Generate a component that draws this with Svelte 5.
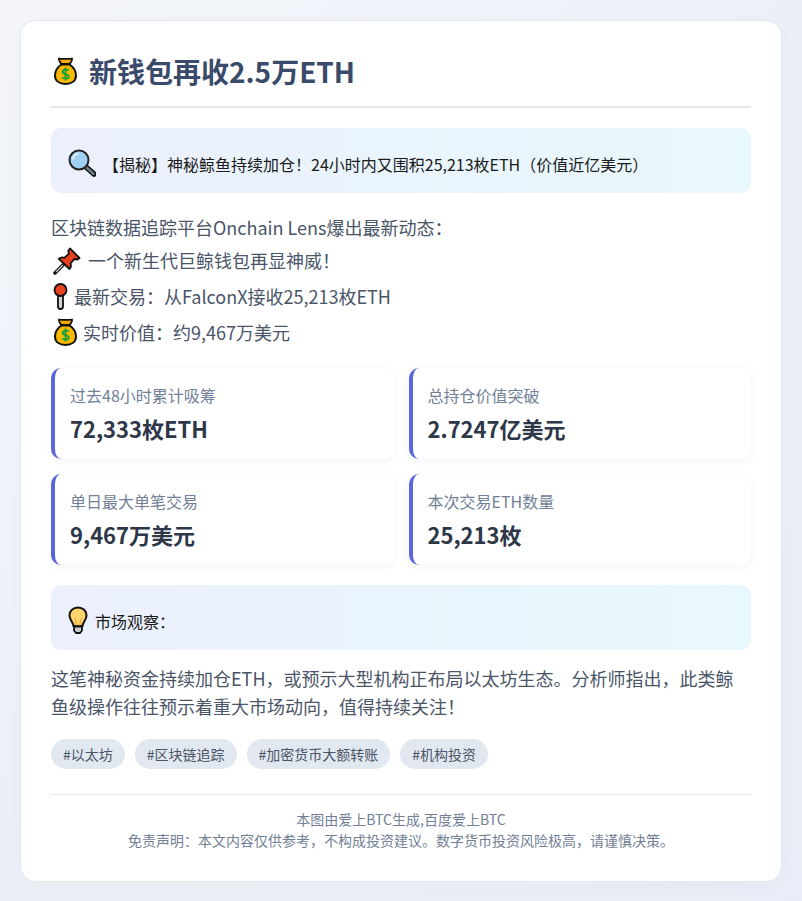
<script>
  const stats = [
    { label: '过去48小时累计吸筹', value: '72,333枚ETH' },
    { label: '总持仓价值突破', value: '2.7247亿美元' },
    { label: '单日最大单笔交易', value: '9,467万美元' },
    { label: '本次交易ETH数量', value: '25,213枚' }
  ]
  const tags = ['#以太坊', '#区块链追踪', '#加密货币大额转账', '#机构投资']
</script>

{#snippet bag()}
  <svg class="emoji bag" width="23" height="28" viewBox="0 0 23 28">
    <path d="M8 7C3.500 10 1 14 1 18.500 1 24 5.500 27 11.500 27S22 24 22 18.500C22 14 19.500 10 15 7z" fill="#fdb900" stroke="#111" stroke-width="2" />
    <path d="M5 1.500c2 .8 4 .3 6.500.3s4.500.5 6.500-.3c.3 2-1 4-2.500 5.500h-8C6 5.500 4.700 3.500 5 1.500z" fill="#f5aa00" stroke="#111" stroke-width="1.800" stroke-linejoin="round" />
    <path d="M7.500 7.500h8" stroke="#111" stroke-width="2" />
    <path d="M14.800 13.500c-1-1.200-6-1.400-6.200 1.200-.2 3 6.400 2 6.200 5-.2 2.600-5.400 2.300-6.700.8M11.500 10.500v13" fill="none" stroke="#12a03c" stroke-width="1.900" />
  </svg>
{/snippet}

<div class="card">
  <h1>{@render bag()}<span>新钱包再收2.5万ETH</span></h1>

  <div class="highlight">
    <svg class="emoji" width="28" height="28" viewBox="0 0 28 28">
      <path d="M18 18l8 7" stroke="#111" stroke-width="5.500" stroke-linecap="round" />
      <path d="M18.500 18.500l7 6.200" stroke="#6b7f86" stroke-width="2.600" stroke-linecap="round" />
      <circle cx="11" cy="11" r="9.500" fill="#9fd0f2" stroke="#222" stroke-width="2" />
      <path d="M5 10.500a6 6 0 0 1 6-6" fill="none" stroke="#d8eefb" stroke-width="2" />
    </svg>
    <span>【揭秘】神秘鲸鱼持续加仓！24小时内又围积25,213枚ETH（价值近亿美元）</span>
  </div>

  <div class="intro">
    <p class="first">区块链数据追踪平台Onchain Lens爆出最新动态：</p>
    <p class="second">
      <svg class="emoji pin" width="28" height="28" viewBox="0 0 28 28">
        <path d="M2 26l8-8" stroke="#111" stroke-width="3.500" stroke-linecap="round" />
        <path d="M3 25l7-7" stroke="#c8ccd0" stroke-width="1.300" />
        <path d="M17 1.500l9.500 9.500-2 1.500-3-.5-4 4.500c.8 2 .4 4-1 5.500L5.800 11.800c1.600-1.400 3.600-1.800 5.500-1l4.500-4-.5-3z" fill="#e8401c" stroke="#111" stroke-width="1.800" stroke-linejoin="round" />
      </svg>
      <span>一个新生代巨鲸钱包再显神威！</span>
    </p>
    <p class="tight">
      <svg class="emoji needle" width="15" height="27" viewBox="0 0 15 27">
        <rect x="5" y="11" width="5" height="15" rx="2.500" fill="#d4d6d8" stroke="#111" stroke-width="1.800" />
        <circle cx="7.500" cy="7" r="6" fill="#e8401c" stroke="#111" stroke-width="1.800" />
      </svg>
      <span>最新交易：从FalconX接收25,213枚ETH</span>
    </p>
    <p class="tight">{@render bag()}<span>实时价值：约9,467万美元</span></p>
  </div>

  <div class="stats">
    {#each stats as stat}
      <div class="stat">
        <div class="label">{stat.label}</div>
        <div class="value">{stat.value}</div>
      </div>
    {/each}
  </div>

  <div class="highlight">
    <svg class="emoji" width="20" height="28" viewBox="0 0 20 28">
      <path d="M10 1.500C5 1.500 1.500 5 1.500 9.500c0 4.500 3.500 6.500 4 10.500h9c.5-4 4-6 4-10.500C18.500 5 15 1.500 10 1.500z" fill="#ffd36b" stroke="#111" stroke-width="2" />
      <path d="M7 12l1.500 8M13 12l-1.500 8" stroke="#f0a830" stroke-width="1" fill="none" />
      <path d="M6 20.500h8v4l-2 2.500H8l-2-2.500z" fill="#c9ccd0" stroke="#111" stroke-width="1.800" stroke-linejoin="round" />
    </svg>
    <span>市场观察：</span>
  </div>

  <p class="analysis">这笔神秘资金持续加仓ETH，或预示大型机构正布局以太坊生态。分析师指出，此类鲸鱼级操作往往预示着重大市场动向，值得持续关注！</p>

  <div class="tags">
    {#each tags as tag}
      <span class="tag">{tag}</span>
    {/each}
  </div>

  <footer>
    <div>本图由爱上BTC生成,百度爱上BTC</div>
    <div>免责声明：本文内容仅供参考，不构成投资建议。数字货币投资风险极高，请谨慎决策。</div>
  </footer>
</div>

<style>
  :global(body) {
    background: linear-gradient(135deg, #f3f5fa 0%, #ecf0f6 50%, #e9ecf6 100%);
    min-height: 100vh;
  }

  .card {
    box-sizing: border-box;
    width: 762px;
    margin: 20px;
    padding: 30px;
    background: #fff;
    border: 1px solid #e4e9f1;
    border-radius: 16px;
    box-shadow: 0 4px 20px rgba(0, 0, 0, 0.02);
    font-family: "Noto Sans CJK SC", "Noto Sans", sans-serif;
    color: #4a5568;
  }

  .emoji {
    flex: none;
  }

  .bag {
    margin-left: 3px;
  }

  h1 {
    display: flex;
    align-items: center;
    gap: 12px;
    margin: 0 0 20px;
    padding-bottom: 15px;
    border-bottom: 2px solid #e2e8f0;
    font-size: 28px;
    line-height: 40px;
    font-weight: 700;
    color: #3a4a6b;
  }

  .highlight {
    display: flex;
    align-items: center;
    gap: 7px;
    height: 65px;
    padding: 0 17px;
    border-radius: 10px;
    background: linear-gradient(90deg, #ebf0fc 0%, #e8f8fc 100%);
    font-size: 16px;
    color: #1a1a1a;
  }

  .highlight svg {
    margin-top: 4px;
  }

  .highlight span {
    padding-top: 7px;
  }

  .intro {
    margin: 18px 0;
    font-size: 18px;
    line-height: 36px;
  }

  .intro p {
    display: flex;
    align-items: center;
    gap: 7px;
  }

  .intro .first {
    line-height: 32px;
  }

  .intro .second {
    line-height: 35px;
  }

  .intro .tight {
    gap: 6px;
  }

  .pin {
    margin-left: 2px;
  }

  .needle {
    margin-left: 2px;
  }

  p {
    margin: 0;
  }

  .stats {
    display: grid;
    grid-template-columns: 1fr 1fr;
    gap: 15px;
    margin-bottom: 20px;
  }

  .stat {
    height: 91px;
    box-sizing: border-box;
    padding: 15px;
    background: #fff;
    border-left: 4px solid #5a67d8;
    border-radius: 10px;
    box-shadow: 0 2px 10px rgba(0, 0, 0, 0.05);
  }

  .label {
    font-size: 16px;
    line-height: 24px;
    color: #718096;
  }

  .value {
    margin-top: 5px;
    font-size: 22px;
    line-height: 33px;
    font-weight: 700;
    color: #2d3748;
  }

  .analysis {
    margin: 14px 0 19px;
    font-size: 18px;
    line-height: 28px;
  }

  .tags {
    display: flex;
    gap: 10px;
    margin-bottom: 25px;
  }

  .tag {
    height: 30px;
    padding: 0 12px;
    border-radius: 15px;
    background: #e2e8f0;
    font-size: 14px;
    line-height: 30px;
  }

  footer {
    border-top: 1px solid #e2e8f0;
    padding-top: 14px;
    font-size: 14px;
    line-height: 21px;
    text-align: center;
    color: #718096;
  }
</style>
